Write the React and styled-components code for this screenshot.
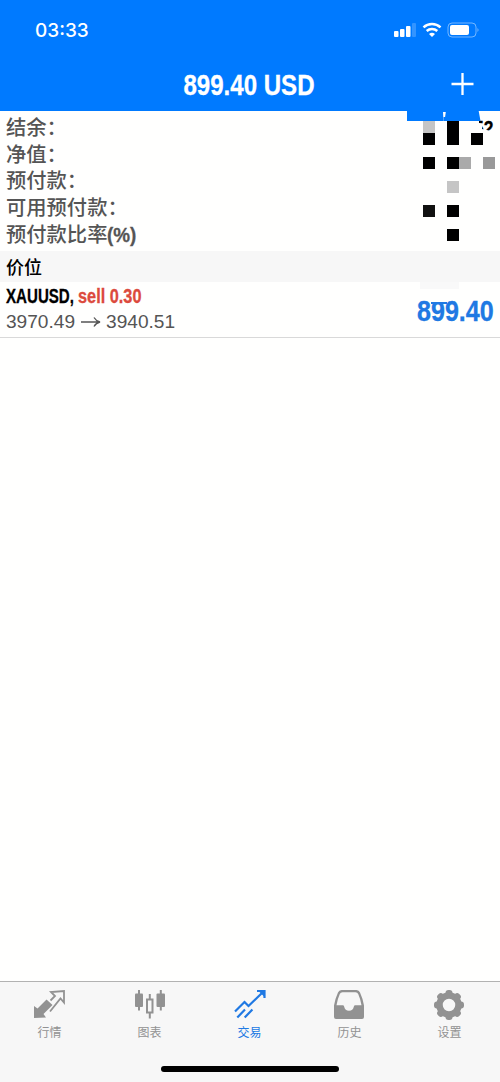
import React from 'react';

import styled, { createGlobalStyle } from 'styled-components';

const GlobalStyle = createGlobalStyle`
  * {
    box-sizing: border-box;
  }
  body {
    margin: 0;
    background-color: #fffffe;
    font-family: "Liberation Sans", "Noto Sans CJK SC", sans-serif;
  }
`;

const Screen = styled.div`
  width: 500px;
  height: 1082px;
  display: flex;
  flex-direction: column;
  overflow: hidden;
`;

const Header = styled.header`
  height: 111px;
  flex-shrink: 0;
  color: #fff;
  background-color: #007aff;
`;

const StatusBar = styled.div`
  height: 60px;
  display: flex;
  align-items: center;
  justify-content: space-between;
  padding: 0 20px 0 35px;
`;

const Clock = styled.span`
  margin-top: 2px;
  font-family: Inter, sans-serif;
  font-size: 19px;
  font-weight: 500;
  line-height: 24px;
`;

const StatusIcons = styled.svg`
  width: 87px;
  height: 20px;
`;

const TitleBar = styled.div`
  height: 51px;
  display: grid;
  grid-template-columns: 1fr auto 1fr;
  align-items: center;
  padding: 0 25px 1px 23px;
`;

const Condensed = styled.span`
  display: inline-block;
  white-space: nowrap;
  font-family: "Liberation Sans", sans-serif;
  font-weight: 700;
  -webkit-text-stroke: 0.3px currentColor;
  transform: scaleX(${({ $scale }) => $scale});
  transform-origin: ${({ $origin }) => $origin || 'left'} center;
`;

const Title = styled.h1`
  grid-column: 2;
  margin: 0;
  font-size: 29px;
  font-weight: 700;
  line-height: 32px;
`;

const AddButton = styled.button`
  grid-column: 3;
  justify-self: end;
  width: 24px;
  height: 24px;
  margin-top: -2px;
  padding: 0;
  border: 0;
  color: #fff;
  background: none;
`;

const Summary = styled.section`
  position: relative;
  height: 140px;
  flex-shrink: 0;
  padding: 4px 6px 0;
`;

const SummaryRow = styled.div`
  height: 26.7px;
  color: #555;
  font-family: "Liberation Sans", "Noto Sans CJK SC", sans-serif;
  font-size: 20.3px;
  font-weight: 500;
  line-height: 26.7px;
`;

const HeaderPatch = styled.svg`
  position: absolute;
  top: -1px;
  left: 407px;
  width: 74px;
  height: 11px;
`;

const Mosaic = styled.div`
  position: absolute;
  top: 10px;
  left: 423px;
  display: grid;
  grid-template-columns: repeat(6, 12px);
  grid-auto-rows: 12px;
`;

const Pixel = styled.span`
  background-color: ${({ $color }) => $color};
`;

const Digits = styled.span`
  position: absolute;
  top: 7px;
  left: 474px;
  color: #000;
  font-size: 20px;
  line-height: 20px;
`;

const DigitsCover = styled.svg`
  position: absolute;
  top: 4px;
  left: 472px;
  width: 26px;
  height: 22px;
`;

const SectionTitle = styled.h2`
  height: 31px;
  flex-shrink: 0;
  margin: 0;
  padding-left: 6px;
  color: #000;
  background-color: #f7f7f7;
  font-family: "Noto Sans CJK SC", sans-serif;
  font-size: 18px;
  font-weight: 500;
  line-height: 31px;
`;

const Position = styled.article`
  position: relative;
  height: 56px;
  flex-shrink: 0;
  display: flex;
  align-items: flex-start;
  justify-content: space-between;
  padding: 2px 6px 0;
  border-bottom: 1px solid #d9d9d9;
`;

const Deal = styled.div`
  display: flex;
  font-size: 20px;
  line-height: 25px;
`;

const Symbol = styled.div`
  width: 71.5px;
`;

const Side = styled.div`
  color: #dc4a3d;
`;

const Prices = styled.div`
  display: flex;
  align-items: center;
  gap: 5.5px;
  color: #555;
  font-size: 19.1px;
  line-height: 26px;
`;

const Profit = styled.div`
  margin-top: 11px;
  color: #2079e3;
  font-size: 29px;
  line-height: 32px;
`;

const Smudge = styled.span`
  position: absolute;
  top: 0;
  left: 420px;
  width: 39px;
  height: 7px;
  background-color: #f9f9f9;
`;

const ProfitBar = styled.span`
  position: absolute;
  top: 16px;
  left: 431px;
  width: 16px;
  height: 6px;
  border-top: 4px solid #fffffe;
  background-color: #2079e3;
`;

const Empty = styled.main`
  flex: 1;
`;

const TabBar = styled.nav`
  height: 101px;
  flex-shrink: 0;
  display: flex;
  flex-direction: column;
  align-items: center;
  justify-content: space-between;
  padding-bottom: 10px;
  border-top: 1px solid #b2b2b2;
  background-color: #f7f7f7;
`;

const Tabs = styled.div`
  width: 100%;
  display: grid;
  grid-template-columns: repeat(5, 1fr);
`;

const Tab = styled.div`
  display: flex;
  flex-direction: column;
  align-items: center;
  padding: 6px 2px 0 0;
  color: ${({ $active }) => ($active ? '#2079e3' : '#929292')};
`;

const TabIcon = styled.svg`
  width: 34px;
  height: 34px;
`;

const TabLabel = styled.span`
  margin: 1px 0 0 1px;
  font-family: "Noto Sans CJK SC", sans-serif;
  font-size: 12px;
  line-height: 18px;
`;

const HomeIndicator = styled.div`
  width: 178px;
  height: 6px;
  border-radius: 3px;
  background-color: #000;
`;

const summaryLabels = ['结余：', '净值：', '预付款：', '可用预付款：'];

const pixels = [
  [1, 1, '#c5c5c5'],
  [3, 1, '#000'],
  [1, 2, '#000'],
  [3, 2, '#000'],
  [5, 2, '#000'],
  [1, 4, '#000'],
  [3, 4, '#000'],
  [4, 4, '#aaa'],
  [6, 4, '#999'],
  [3, 6, '#c5c5c5'],
  [1, 8, '#111'],
  [3, 8, '#000'],
  [3, 10, '#000'],
];

const QuotesIcon = () => (
  <TabIcon viewBox="0 0 34 34">
    <path d="M2 30V18l3.500 2.500 9-9 6 5.500-9 9 2.500 3.500z" fill="currentColor" />
    <path
      d="M18.500 12.500L23 8l-4-4 13-1v11.500l-3.500-4L18 23.500"
      fill="none"
      stroke="currentColor"
      strokeWidth="1.800"
    />
  </TabIcon>
);

const ChartIcon = () => (
  <TabIcon viewBox="0 0 34 34">
    <rect x="3" y="5.500" width="8" height="13.500" rx="1" fill="currentColor" />
    <rect x="24.500" y="5.500" width="8.500" height="13.500" rx="1" fill="currentColor" />
    <path
      d="M7 2v20.500M28.800 2v20.500M15 11.500h5.500v13H15zM17.800 6v5.500M17.800 24.500v6"
      fill="none"
      stroke="currentColor"
      strokeWidth="2"
    />
  </TabIcon>
);

const TradeIcon = () => (
  <TabIcon viewBox="0 0 34 34">
    <path
      d="M3 23.500L12.500 14l4 4L31.500 3.500M25 3h7.500v7M5.300 29.500l7.700-8M12.700 29.500l7.700-8"
      fill="none"
      stroke="currentColor"
      strokeWidth="2.200"
    />
    <path d="M25.500 2H33v7.500z" fill="currentColor" />
  </TabIcon>
);

const HistoryIcon = () => (
  <TabIcon viewBox="0 0 34 34">
    <path
      fillRule="evenodd"
      d="M9.500 2h15q2.500 0 3.500 2.500Q31 11 32 17.500V29q0 2-2 2H4q-2 0-2-2V17.500Q3 11 6 4.500 7 2 9.500 2zM10.500 4.200q-2 0-2.700 1.800Q5.500 11 4.500 17.300H11q1.200 0 1.200 1.500a4.900 4.900 0 0 0 9.600 0q0-1.500 1.200-1.500h6.500Q28.500 11 26.200 6q-.7-1.800-2.700-1.800z"
      fill="currentColor"
    />
  </TabIcon>
);

const SettingsIcon = () => (
  <TabIcon viewBox="0 0 34 34">
    <circle cx="17" cy="17" r="9.500" fill="none" stroke="currentColor" strokeWidth="6.500" />
    {[0, 45, 90, 135, 180, 225, 270, 315].map((angle) => (
      <rect
        key={angle}
        x="13.500"
        y="2"
        width="7"
        height="6"
        rx="3"
        fill="currentColor"
        transform={`rotate(${angle} 17 17)`}
      />
    ))}
  </TabIcon>
);

const tabs = [
  { title: '行情', Icon: QuotesIcon },
  { title: '图表', Icon: ChartIcon },
  { title: '交易', Icon: TradeIcon, active: true },
  { title: '历史', Icon: HistoryIcon },
  { title: '设置', Icon: SettingsIcon },
];

const renderStatusIcons = () => (
  <StatusIcons viewBox="0 0 87 20" fill="#fff">
    <rect x="1" y="11" width="4.500" height="6" rx="1" />
    <rect x="7" y="9" width="4.500" height="8" rx="1" />
    <rect x="13" y="6" width="4.500" height="11" rx="1" />
    <rect x="19" y="3" width="4" height="14" rx="1" opacity="0.2" />
    <path
      d="M30.500 7.300a12.500 12.500 0 0 1 17 0M33.700 11a8 8 0 0 1 10.600 0"
      fill="none"
      stroke="#fff"
      strokeWidth="2.500"
    />
    <path d="M36 14a4.500 4.500 0 0 1 6 0l-3 3z" />
    <rect x="55" y="3" width="28" height="14" rx="4" fill="none" stroke="#fff" opacity="0.45" />
    <rect x="57" y="5" width="19" height="10" rx="2" />
    <path d="M84.500 8v4q2-2 0-4" opacity="0.5" />
  </StatusIcons>
);

const renderMask = () => (
  <>
    <Digits>
      <Condensed $scale={0.87}>52</Condensed>
    </Digits>
    <DigitsCover viewBox="0 0 26 22">
      <path d="M0 0H7V8L10 9V14L17 15.500H26V22H0z" fill="#fffffe" />
    </DigitsCover>
    <HeaderPatch viewBox="0 0 74 11">
      <path d="M0 0h71.500l2 11H37.500L38.800 2H36l.5 9H0z" fill="#007aff" />
      <path d="M36.500 7h2v4h-2z" fill="#007aff" />
    </HeaderPatch>
    <Mosaic>
      {pixels.map(([column, row, color]) => (
        <Pixel key={`${column}-${row}`} $color={color} style={{ gridColumn: column, gridRow: row }} />
      ))}
    </Mosaic>
  </>
);

const App = () => (
  <Screen>
    <GlobalStyle />
    <Header>
      <StatusBar>
        <Clock>03:33</Clock>
        {renderStatusIcons()}
      </StatusBar>
      <TitleBar>
        <Title>
          <Condensed $scale={0.83} $origin="center">899.40 USD</Condensed>
        </Title>
        <AddButton aria-label="+">
          <svg width="24" height="24" viewBox="0 0 24 24">
            <path d="M11.500 1v22M.5 12h22" stroke="currentColor" strokeWidth="2.300" />
          </svg>
        </AddButton>
      </TitleBar>
    </Header>
    <Summary>
      {summaryLabels.map((label) => (
        <SummaryRow key={label}>{label}</SummaryRow>
      ))}
      <SummaryRow>
        预付款比率
        <Condensed $scale={0.93}>(%)</Condensed>
      </SummaryRow>
      {renderMask()}
    </Summary>
    <SectionTitle>价位</SectionTitle>
    <Position>
      <div>
        <Deal>
          <Symbol>
            <Condensed $scale={0.755}>XAUUSD,</Condensed>
          </Symbol>
          <Side>
            <Condensed $scale={0.815}>sell 0.30</Condensed>
          </Side>
        </Deal>
        <Prices>
          <span>3970.49</span>
          <svg width="20" height="12" viewBox="0 0 20 12">
            <path
              d="M0 6h18M13 1.500Q15 5 19 6q-4 1-6 4.500"
              fill="none"
              stroke="currentColor"
              strokeWidth="1.300"
            />
          </svg>
          <span>3940.51</span>
        </Prices>
      </div>
      <Profit>
        <Condensed $scale={0.865} $origin="right">899.40</Condensed>
      </Profit>
      <ProfitBar />
      <Smudge />
    </Position>
    <Empty />
    <TabBar>
      <Tabs>
        {tabs.map(({ title, Icon, active }) => (
          <Tab key={title} $active={active}>
            <Icon />
            <TabLabel>{title}</TabLabel>
          </Tab>
        ))}
      </Tabs>
      <HomeIndicator />
    </TabBar>
  </Screen>
);

export default App;
